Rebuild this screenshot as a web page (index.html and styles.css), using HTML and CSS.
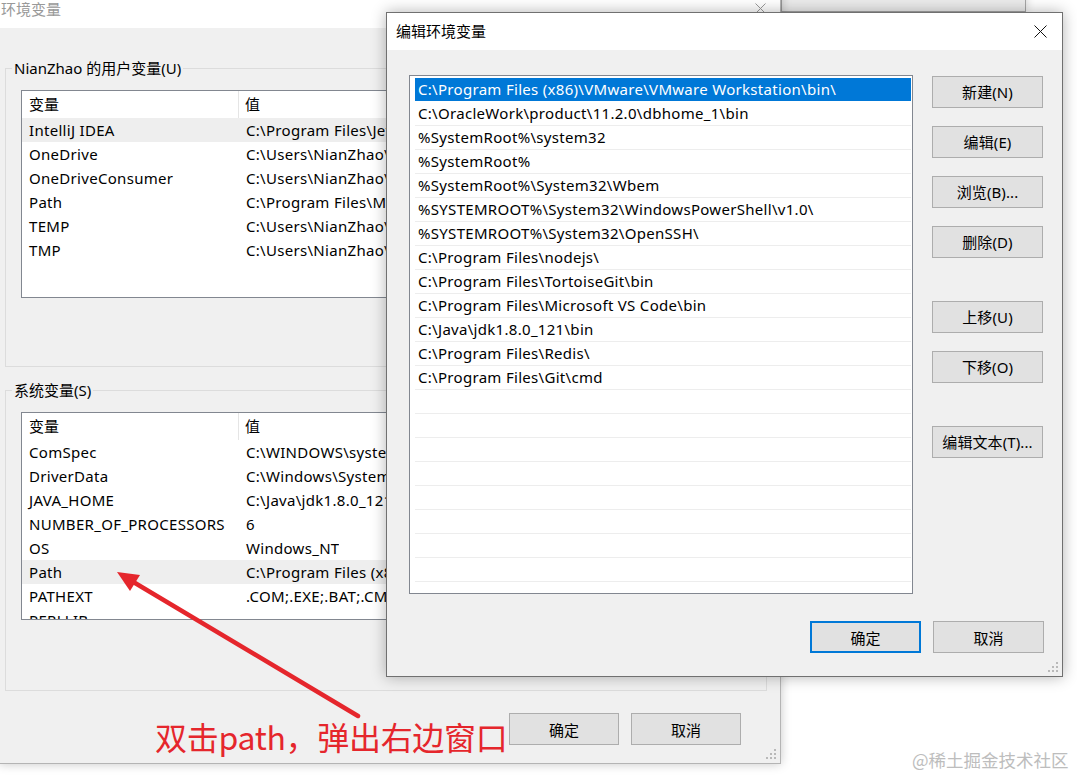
FILE: index.html
```html
<!DOCTYPE html>
<html lang="zh-CN">
<head>
<meta charset="utf-8">
<title>环境变量</title>
<link rel="stylesheet" href="styles.css">
</head>
<body>
<div class="desktop">
  <div class="win back-win"></div>

  <div class="win env-win">
    <div class="titlebar inactive">
      <span class="title">环境变量</span>
      <span class="close-btn"><svg width="11" height="11" viewBox="0 0 11 11"><path d="M0.5 0.5L10.5 10.5M10.5 0.5L0.5 10.5" stroke="#9a9a9a" stroke-width="1" fill="none"/></svg></span>
    </div>
    <div class="env-body">
      <div class="group group-user">
        <div class="group-label">NianZhao 的用户变量(U)</div>
        <div class="varlist">
          <div class="vrow head"><span class="c1">变量</span><span class="c2">值</span></div>
          <div class="vrow hl"><span class="c1">IntelliJ IDEA</span><span class="c2">C:\Program Files\JetBrains\</span></div>
          <div class="vrow"><span class="c1">OneDrive</span><span class="c2">C:\Users\NianZhao\OneDrive</span></div>
          <div class="vrow"><span class="c1">OneDriveConsumer</span><span class="c2">C:\Users\NianZhao\OneDrive</span></div>
          <div class="vrow"><span class="c1">Path</span><span class="c2">C:\Program Files\MySQL\</span></div>
          <div class="vrow"><span class="c1">TEMP</span><span class="c2">C:\Users\NianZhao\AppData</span></div>
          <div class="vrow"><span class="c1">TMP</span><span class="c2">C:\Users\NianZhao\AppData</span></div>
        </div>
      </div>

      <div class="group group-sys">
        <div class="group-label">系统变量(S)</div>
        <div class="varlist">
          <div class="vrow head"><span class="c1">变量</span><span class="c2">值</span></div>
          <div class="vrow"><span class="c1">ComSpec</span><span class="c2">C:\WINDOWS\system32\cmd.exe</span></div>
          <div class="vrow"><span class="c1">DriverData</span><span class="c2">C:\Windows\System32\Drivers</span></div>
          <div class="vrow"><span class="c1">JAVA_HOME</span><span class="c2">C:\Java\jdk1.8.0_121</span></div>
          <div class="vrow"><span class="c1">NUMBER_OF_PROCESSORS</span><span class="c2">6</span></div>
          <div class="vrow"><span class="c1">OS</span><span class="c2">Windows_NT</span></div>
          <div class="vrow hl"><span class="c1">Path</span><span class="c2">C:\Program Files (x86)\VMware\</span></div>
          <div class="vrow"><span class="c1">PATHEXT</span><span class="c2">.COM;.EXE;.BAT;.CMD;.VBS</span></div>
          <div class="vrow"><span class="c1">PERLLIB</span><span class="c2"></span></div>
        </div>
      </div>

      <div class="env-footer">
        <button class="btn">确定</button>
        <button class="btn">取消</button>
      </div>
    </div>
    <svg class="grip" width="12" height="12" viewBox="0 0 12 12"><g fill="#b9b9b9"><rect x="9" y="1" width="2" height="2"/><rect x="5" y="5" width="2" height="2"/><rect x="9" y="5" width="2" height="2"/><rect x="1" y="9" width="2" height="2"/><rect x="5" y="9" width="2" height="2"/><rect x="9" y="9" width="2" height="2"/></g></svg>
  </div>

  <div class="win edit-win">
    <div class="titlebar">
      <span class="title">编辑环境变量</span>
      <span class="close-btn"><svg width="13" height="13" viewBox="0 0 13 13"><path d="M0.5 0.5L12.5 12.5M12.5 0.5L0.5 12.5" stroke="#111" stroke-width="1" fill="none"/></svg></span>
    </div>
    <div class="edit-body">
      <div class="edit-main">
        <div class="pathlist">
          <div class="prow sel">C:\Program Files (x86)\VMware\VMware Workstation\bin\</div>
          <div class="prow">C:\OracleWork\product\11.2.0\dbhome_1\bin</div>
          <div class="prow">%SystemRoot%\system32</div>
          <div class="prow">%SystemRoot%</div>
          <div class="prow">%SystemRoot%\System32\Wbem</div>
          <div class="prow">%SYSTEMROOT%\System32\WindowsPowerShell\v1.0\</div>
          <div class="prow">%SYSTEMROOT%\System32\OpenSSH\</div>
          <div class="prow">C:\Program Files\nodejs\</div>
          <div class="prow">C:\Program Files\TortoiseGit\bin</div>
          <div class="prow">C:\Program Files\Microsoft VS Code\bin</div>
          <div class="prow">C:\Java\jdk1.8.0_121\bin</div>
          <div class="prow">C:\Program Files\Redis\</div>
          <div class="prow">C:\Program Files\Git\cmd</div>
          <div class="prow"></div>
          <div class="prow"></div>
          <div class="prow"></div>
          <div class="prow"></div>
          <div class="prow"></div>
          <div class="prow"></div>
          <div class="prow"></div>
          <div class="prow"></div>
        </div>
        <div class="btn-col">
          <button class="btn">新建(N)</button>
          <button class="btn">编辑(E)</button>
          <button class="btn">浏览(B)...</button>
          <button class="btn">删除(D)</button>
          <button class="btn gap-before">上移(U)</button>
          <button class="btn">下移(O)</button>
          <button class="btn gap-before">编辑文本(T)...</button>
        </div>
      </div>
      <div class="edit-footer">
        <button class="btn default">确定</button>
        <button class="btn">取消</button>
      </div>
    </div>
    <svg class="grip" width="12" height="12" viewBox="0 0 12 12"><g fill="#b9b9b9"><rect x="9" y="1" width="2" height="2"/><rect x="5" y="5" width="2" height="2"/><rect x="9" y="5" width="2" height="2"/><rect x="1" y="9" width="2" height="2"/><rect x="5" y="9" width="2" height="2"/><rect x="9" y="9" width="2" height="2"/></g></svg>
  </div>

  <svg class="annot-arrow" width="1077" height="776" viewBox="0 0 1077 776">
    <line x1="358" y1="716" x2="130" y2="580" stroke="#e5262c" stroke-width="4.5" stroke-linecap="round"/>
    <polygon points="117,572 140,575 130,591" fill="#e5262c"/>
  </svg>
  <div class="annot-text">双击path，弹出右边窗口</div>
  <div class="watermark">@稀土掘金技术社区</div>
</div>
</body>
</html>
```

FILE: styles.css
```css
* { box-sizing: border-box; }
html, body { margin: 0; padding: 0; }
body {
  width: 1077px;
  height: 776px;
  overflow: hidden;
  background: #fff;
  font-family: "Noto Sans", "Noto Sans CJK SC", sans-serif;
  font-size: 15px;
  color: #000;
}
.desktop {
  position: relative;
  width: 1077px;
  height: 776px;
  overflow: hidden;
  background: #fff;
}
.win { position: absolute; }

/* window behind */
.back-win {
  left: 781px;
  top: -20px;
  width: 245px;
  height: 32px;
  background: #ebebeb;
  border: 1px solid #a5a5a5;
  box-shadow: 0 0 10px rgba(0, 0, 0, 0.18);
}

/* title bars */
.titlebar {
  flex: none;
  height: 38px;
  background: #fff;
  display: flex;
  align-items: center;
  justify-content: space-between;
}
.titlebar .title { line-height: 20px; white-space: nowrap; }
.titlebar.inactive .title { color: #999; }
.close-btn {
  display: flex;
  align-items: center;
  justify-content: center;
  height: 38px;
}

/* left window */
.env-win {
  left: -1px;
  top: -11px;
  width: 782px;
  height: 775px;
  background: #f0f0f0;
  border: 1px solid #b4b4b4;
  box-shadow: 0 0 10px rgba(0, 0, 0, 0.22);
  display: flex;
  flex-direction: column;
}
.env-win .titlebar { padding-left: 1px; }
.env-win .close-btn { width: 40px; margin-top: -2px; }
.env-body {
  padding: 40px 13px 0 5px;
  display: flex;
  flex-direction: column;
}
.group {
  border: 1px solid #dcdcdc;
  padding: 0 15px;
}
.group-user { padding-bottom: 68px; }
.group-sys { margin-top: 23px; padding-bottom: 70px; }
.group-label {
  width: fit-content;
  margin: -11px 0 0 -9px;
  padding: 0 2px;
  line-height: 20px;
  background: #f0f0f0;
  color: #000;
  white-space: nowrap;
}
.varlist {
  margin-top: 12px;
  height: 208px;
  background: #fff;
  border: 1px solid #828790;
  overflow: hidden;
}
.vrow {
  display: flex;
  height: 24px;
  line-height: 24px;
  white-space: nowrap;
  letter-spacing: 0.3px;
}
.vrow.head { height: 27px; line-height: 27px; letter-spacing: 0; }
.vrow.hl { background: #eeeeee; }
.vrow .c1 {
  flex: none;
  width: 217px;
  padding-left: 7px;
  overflow: hidden;
}
.vrow.head .c1 { border-right: 1px solid #e5e5e5; }
.vrow.head .c2 { padding-left: 6px; }
.vrow .c2 { padding-left: 7px; overflow: hidden; }
.env-footer {
  display: flex;
  justify-content: flex-end;
  gap: 12px;
  margin-top: 22px;
  padding-right: 26px;
}
.env-footer .btn { width: 110px; }

/* buttons */
.btn {
  height: 32px;
  width: 111px;
  padding: 0;
  background: #e1e1e1;
  border: 1px solid #adadad;
  border-radius: 0;
  font-family: "Noto Sans", "Noto Sans CJK SC", sans-serif;
  font-size: 15px;
  letter-spacing: 0.1px;
  color: #000;
  white-space: nowrap;
}
.btn.default { border: 2px solid #0078d7; }

.grip {
  position: absolute;
  right: 3px;
  bottom: 3px;
}

/* edit dialog */
.edit-win {
  left: 386px;
  top: 12px;
  width: 677px;
  height: 665px;
  background: #f0f0f0;
  border: 1px solid #707070;
  box-shadow: 0 0 14px rgba(0, 0, 0, 0.3);
  display: flex;
  flex-direction: column;
}
.edit-win .titlebar { height: 37px; padding-left: 9px; }
.edit-win .titlebar .title { margin-top: -1px; }
.edit-win .close-btn { width: 44px; height: 37px; }
.edit-body {
  padding: 25px 18px 0 22px;
  display: flex;
  flex-direction: column;
}
.edit-main {
  display: flex;
  gap: 19px;
  align-items: flex-start;
}
.pathlist {
  flex: none;
  width: 504px;
  height: 519px;
  background: #fff;
  border: 1px solid #828790;
  padding: 2px 1px 0 5px;
  overflow: hidden;
}
.prow {
  height: 24px;
  line-height: 23px;
  padding-left: 3px;
  border-bottom: 1px solid #ededed;
  white-space: nowrap;
  overflow: hidden;
  letter-spacing: 0.3px;
}
.prow.sel {
  background: #0078d7;
  color: #fff;
  border-bottom-color: #fff;
}
.btn-col {
  display: flex;
  flex-direction: column;
  gap: 18px;
  padding-top: 1px;
}
.btn-col .btn { height: 32px; line-height: 28px; }
.btn-col .gap-before { margin-top: 25px; }
.edit-footer {
  display: flex;
  justify-content: flex-end;
  gap: 12px;
  margin-top: 27px;
}

/* annotation overlay */
.annot-arrow {
  position: absolute;
  left: 0;
  top: 0;
  pointer-events: none;
}
.annot-text {
  position: absolute;
  left: 155px;
  top: 716px;
  font-family: "Noto Sans CJK SC", sans-serif;
  font-size: 32px;
  letter-spacing: -0.3px;
  line-height: 40px;
  color: #e5262c;
  white-space: nowrap;
}
.watermark {
  position: absolute;
  left: 912px;
  top: 749px;
  font-family: "Noto Sans CJK SC", sans-serif;
  font-size: 17.5px;
  line-height: 22px;
  color: #bdbdbd;
  white-space: nowrap;
}
```
